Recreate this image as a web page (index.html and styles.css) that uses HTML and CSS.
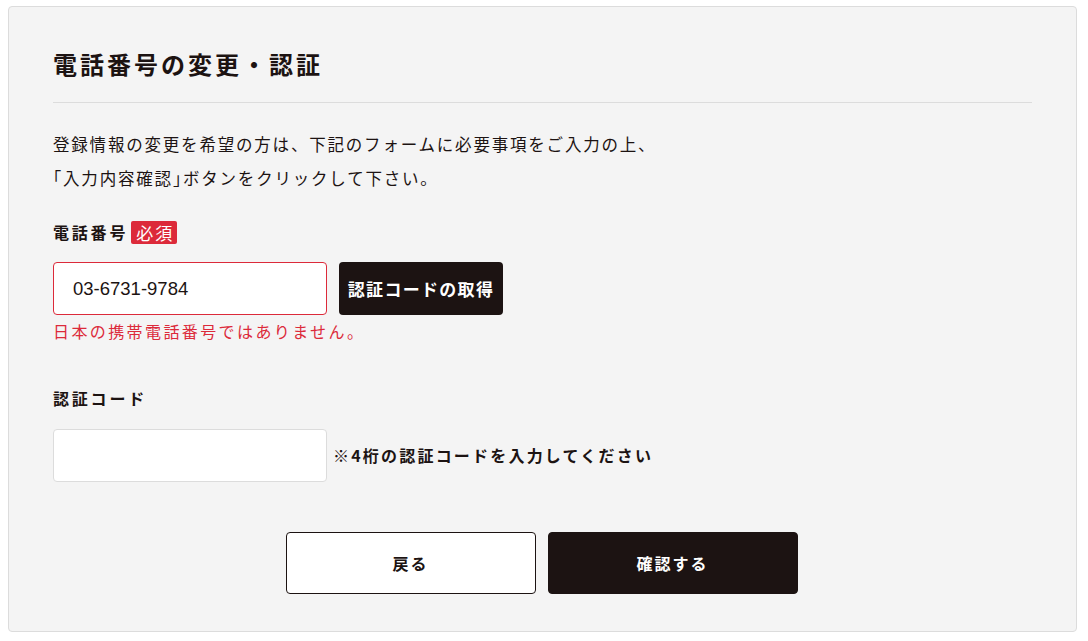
FILE: index.html
```html
<!DOCTYPE html>
<html lang="ja">
<head>
<meta charset="utf-8">
<link rel="stylesheet" href="styles.css">
</head>
<body>
<main class="card">
  <h1 class="title">電話番号の変更・認証</h1>
  <p class="lead">登録情報の変更を希望の方は、下記のフォームに必要事項をご入力の上、<br><span class="bracket">「</span>入力内容確認<span class="bracket">」</span>ボタンをクリックして下さい。</p>

  <div class="field">
    <div class="label">電話番号<span class="req">必須</span></div>
    <div class="row">
      <input class="input input-error" type="text" value="03-6731-9784">
      <button class="btn-code" type="button">認証コードの取得</button>
    </div>
    <p class="error">日本の携帯電話番号ではありません。</p>
  </div>

  <div class="field field-code">
    <div class="label">認証コード</div>
    <div class="row row-code">
      <input class="input" type="text" value="">
      <span class="note">※4桁の認証コードを入力してください</span>
    </div>
  </div>

  <div class="actions">
    <button class="btn btn-back" type="button">戻る</button>
    <button class="btn btn-confirm" type="button">確認する</button>
  </div>
</main>
</body>
</html>
```

FILE: styles.css
```css
html, body {
  margin: 0;
  padding: 0;
  background: #ffffff;
}
body {
  padding: 6px 11px 0 8px;
  font-family: "Noto Sans CJK JP", "Noto Sans", sans-serif;
  color: #1c1312;
}
.card {
  box-sizing: border-box;
  width: 1069px;
  height: 626px;
  background: #f4f4f4;
  border: 1px solid #dcdcdc;
  border-radius: 4px;
  padding: 37px 44px 0 44px;
}
.title {
  margin: 0;
  font-size: 24px;
  font-weight: 700;
  letter-spacing: 3px;
  line-height: 40px;
  padding-bottom: 18px;
  border-bottom: 1px solid #dcdcdc;
}
.lead {
  margin: 24px 0 0 0;
  font-size: 16.5px;
  letter-spacing: 1.8px;
  line-height: 34px;
}
.bracket {
  font-feature-settings: "halt";
}
.field {
  margin-top: 26px;
}
.label {
  display: flex;
  align-items: center;
  font-size: 16px;
  font-weight: 700;
  letter-spacing: 2.8px;
  line-height: 23px;
  height: 23px;
}
.req {
  display: inline-block;
  margin-left: 3px;
  background: #dc2a3a;
  color: #ffffff;
  font-weight: 400;
  font-size: 17px;
  letter-spacing: 2px;
  line-height: 23px;
  padding: 0 3px 0 5px;
  border-radius: 2px;
}
.row {
  display: flex;
  align-items: center;
  gap: 12px;
  margin-top: 18px;
}
.input {
  box-sizing: border-box;
  width: 274px;
  height: 53px;
  background: #ffffff;
  border: 1px solid #dcdcdc;
  border-radius: 4px;
  padding: 0 19px;
  font-family: "Liberation Sans", Arial, sans-serif;
  font-size: 18.5px;
  color: #1c1312;
  outline: none;
}
.input-error {
  border-color: #dc2a3a;
}
.btn-code {
  height: 53px;
  width: 164px;
  background: #1c1312;
  color: #ffffff;
  border: none;
  border-radius: 4px;
  padding: 0;
  font-family: "Noto Sans CJK JP", "Noto Sans", sans-serif;
  font-size: 17px;
  font-weight: 700;
  letter-spacing: 1.3px;
}
.error {
  margin: 4px 0 0 0;
  color: #dc2a3a;
  font-size: 16px;
  letter-spacing: 2.4px;
  line-height: 24px;
}
.field-code {
  margin-top: 44px;
}
.row-code {
  margin-top: 19px;
  gap: 6px;
}
.note {
  font-size: 16px;
  font-weight: 700;
  letter-spacing: 2.2px;
  padding-bottom: 2px;
}
.actions {
  display: flex;
  justify-content: center;
  gap: 12px;
  margin-top: 50px;
  padding-right: 2px;
}
.btn {
  box-sizing: border-box;
  width: 250px;
  height: 62px;
  border-radius: 4px;
  font-family: "Noto Sans CJK JP", "Noto Sans", sans-serif;
  font-size: 16px;
  font-weight: 700;
  letter-spacing: 2px;
}
.btn-back {
  background: #ffffff;
  color: #1c1312;
  border: 1px solid #1c1312;
}
.btn-confirm {
  background: #1c1312;
  color: #ffffff;
  border: 1px solid #1c1312;
}
```
